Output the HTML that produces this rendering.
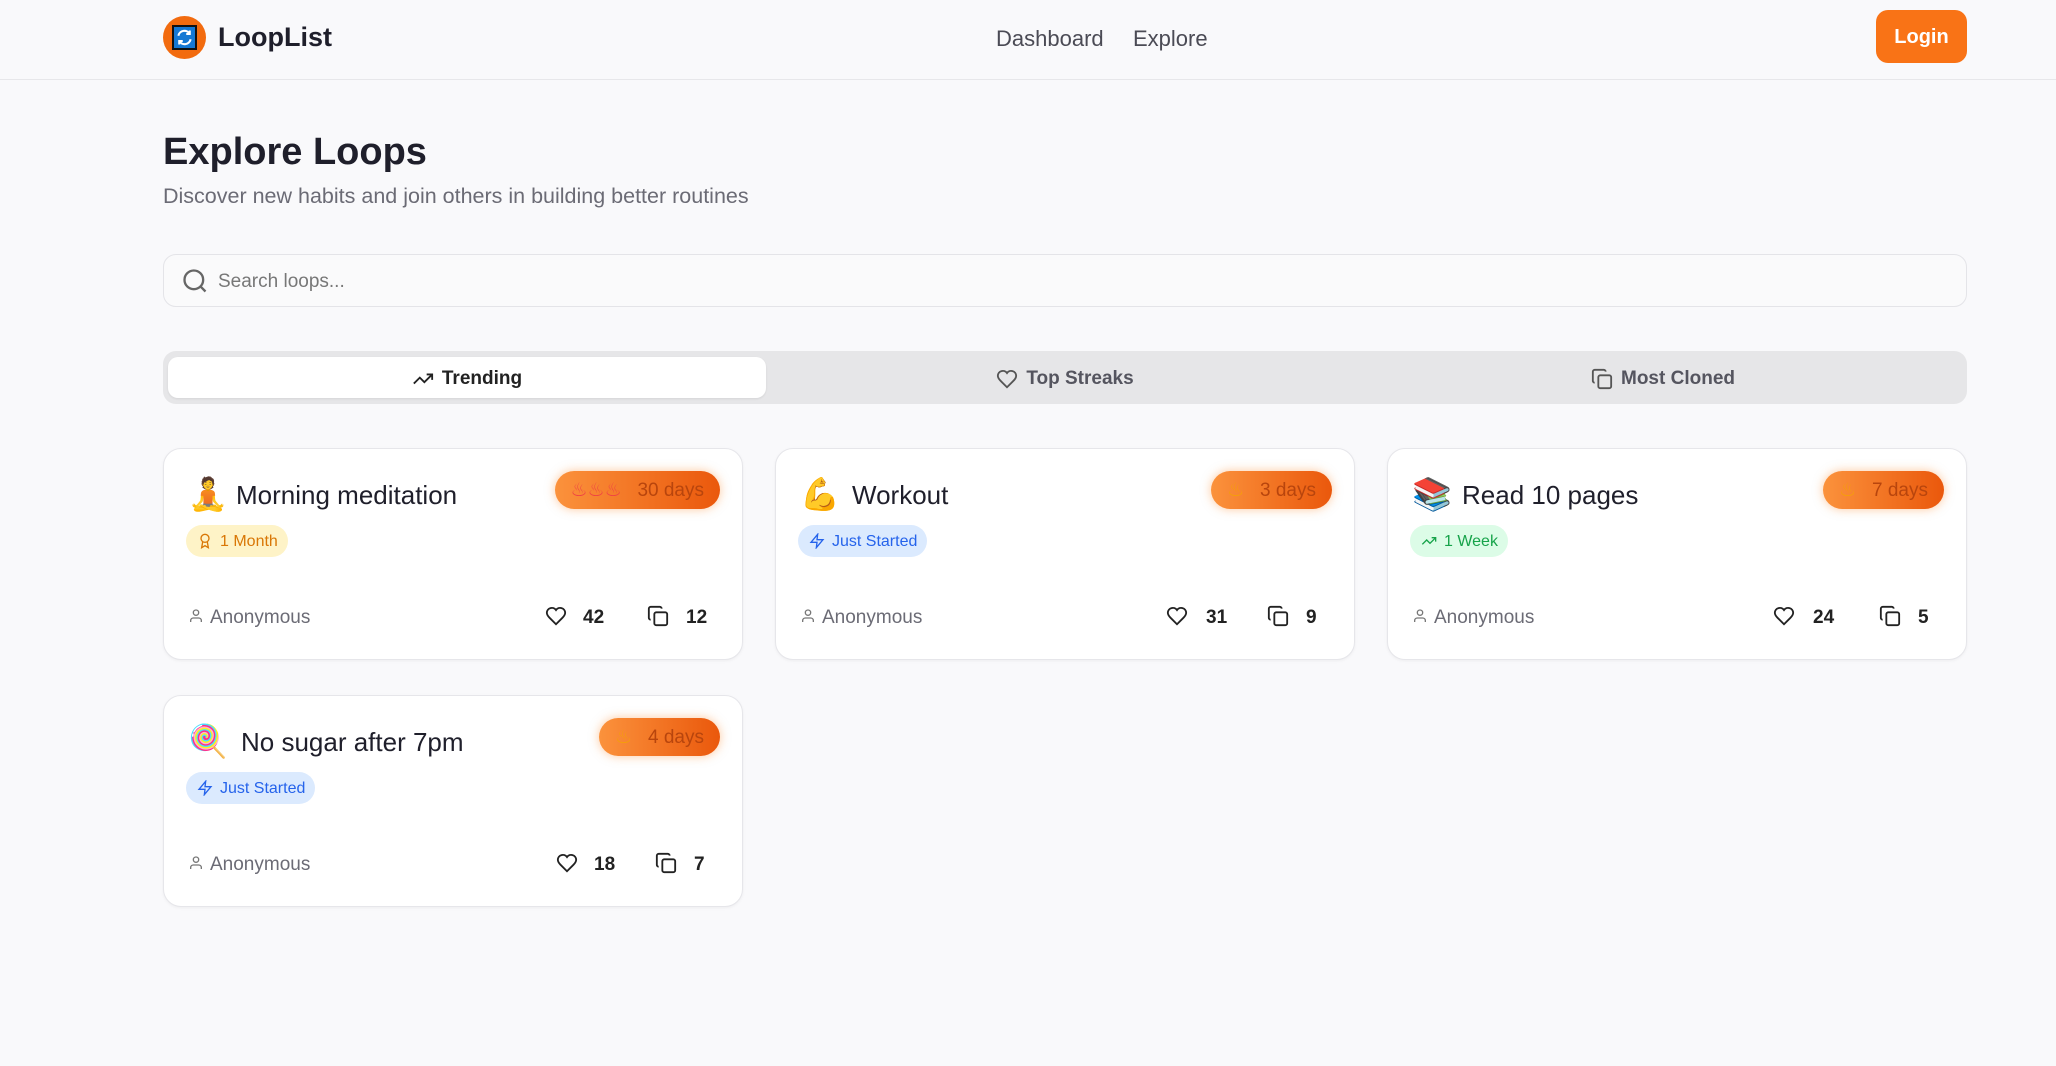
<!DOCTYPE html>
<html><head><meta charset="utf-8"><style>
*{box-sizing:border-box;margin:0;padding:0}
body{width:2056px;height:1066px;background:#f9f9fb;font-family:"Liberation Sans","DejaVu Sans",sans-serif;color:#1f1f2b;position:relative;overflow:hidden}
.hdr{position:absolute;left:0;top:0;width:2056px;height:80px;border-bottom:1px solid #e7e7ea}
.logo{position:absolute;left:163px;top:16px;width:43px;height:43px;border-radius:50%;background:#f26b0f}
.logo i{position:absolute;left:9px;top:9px;width:25px;height:25px;background:#1478d4;border:2px solid #111}
.brand{position:absolute;left:218px;top:22px;font-size:27px;font-weight:bold}
.nav{position:absolute;top:26px;font-size:22px;color:#4b4b55}
.login{position:absolute;left:1876px;top:10px;width:91px;height:53px;border-radius:12px;background:#f97316;color:#fff;font-weight:bold;font-size:20px;text-align:center;line-height:55px}
h1{position:absolute;left:163px;top:131px;font-size:38px;font-weight:bold}
.sub{position:absolute;left:163px;top:184px;font-size:21.5px;color:#6b6b75}
.search{position:absolute;left:163px;top:254px;width:1804px;height:53px;border:1px solid #e4e4e8;border-radius:13px;background:#fafafb}
.search span{position:absolute;left:54px;top:16px;font-size:19px;color:#777}
.tabs{position:absolute;left:163px;top:351px;width:1804px;height:53px;border-radius:13px;background:#e6e6e8}
.tab{position:absolute;top:6px;height:41px;width:598px;border-radius:10px;font-size:19px;font-weight:bold;color:#55555f;display:flex;align-items:center;justify-content:center;gap:8px;padding-top:2px}
.tab.on{background:#fff;color:#222;box-shadow:0 1px 2px rgba(0,0,0,.08)}
.card{position:absolute;width:580px;height:212px;background:#fff;border:1px solid #e6e6ea;border-radius:18px;box-shadow:0 1px 3px rgba(0,0,0,.05)}
.em{position:absolute;left:24px;top:26px;font-size:32px;font-family:"DejaVu Sans",sans-serif}
.ttl{position:absolute;left:72px;top:31px;font-size:26px;font-weight:500}
.badge{position:absolute;top:22px;right:22px;height:38px;border-radius:19px;background:linear-gradient(90deg,#fb923c,#ea580c);color:#b8450d;font-size:19px;line-height:40px;padding:0 16px 0 16px;box-shadow:0 0 10px rgba(251,146,60,.5)}
.tag{position:absolute;left:22px;top:76px;height:32px;border-radius:16px;font-size:16px;line-height:33px;padding:0 10px 0 34px}
.tag svg{position:absolute;left:11px;top:8px}
.foot{position:absolute;top:158px;font-size:19px;color:#6b6b75}
.num{position:absolute;top:158px;font-size:19px;font-weight:bold;color:#222}
.ic{position:absolute;top:156px}
</style></head><body>
<div class="hdr">
<div class="logo"><i><svg width="21" height="21" viewBox="0 0 24 24" fill="none" stroke="#fff" stroke-width="2.4"><path d="M5 10a7 7 0 0 1 13-2M19 14a7 7 0 0 1-13 2"/><path d="M18 4v4h-4M6 20v-4h4"/></svg></i></div>
<div class="brand">LoopList</div>
<div class="nav" style="left:996px">Dashboard</div>
<div class="nav" style="left:1133px">Explore</div>
<div class="login">Login</div>
</div>
<h1>Explore Loops</h1>
<div class="sub">Discover new habits and join others in building better routines</div>
<div class="search"><svg style="position:absolute;left:17px;top:12px" width="28" height="28" viewBox="0 0 24 24" fill="none" stroke="#666" stroke-width="2"><circle cx="11" cy="11" r="8"/><path d="M21 21l-4.3-4.3"/></svg><span>Search loops...</span></div>
<div class="tabs">
<div class="tab on" style="left:5px"><svg width="22" height="22" viewBox="0 0 24 24" fill="none" stroke="#222" stroke-width="2"><path d="M22 7l-8.5 8.5-5-5L2 17M16 7h6v6"/></svg>Trending</div>
<div class="tab" style="left:603px"><svg width="22" height="22" viewBox="0 0 24 24" fill="none" stroke="#555" stroke-width="2"><path d="M19 14c1.5-1.5 3-3.2 3-5.5A5.5 5.5 0 0 0 12 5.5 5.5 5.5 0 0 0 2 8.5c0 2.3 1.5 4 3 5.5l7 7z"/></svg>Top Streaks</div>
<div class="tab" style="left:1201px"><svg width="22" height="22" viewBox="0 0 24 24" fill="none" stroke="#555" stroke-width="2"><rect x="8" y="8" width="14" height="14" rx="2"/><path d="M4 16c-1.1 0-2-.9-2-2V4c0-1.1.9-2 2-2h10c1.1 0 2 .9 2 2"/></svg>Most Cloned</div>
</div>

<div class="card" style="left:163px;top:448px">
<div class="em">🧘</div><div class="ttl">Morning meditation</div>
<div class="badge"><span style="color:#ef4444">♨♨♨</span>&nbsp;&nbsp; 30 days</div>
<div class="tag" style="background:#fef3c7;color:#d97706"><svg width="16" height="16" viewBox="0 0 24 24" fill="none" stroke="#d97706" stroke-width="2"><circle cx="12" cy="8" r="6"/><path d="M15.5 13.5L17 22l-5-3-5 3 1.5-8.5"/></svg>1 Month</div>
<svg class="ic" style="left:24px;top:158px" width="16" height="18" viewBox="0 0 24 24" fill="none" stroke="#777" stroke-width="2"><circle cx="12" cy="7" r="4"/><path d="M4 21v-2a4 4 0 0 1 4-4h8a4 4 0 0 1 4 4v2"/></svg><div class="foot" style="left:46px">Anonymous</div>
<svg class="ic" style="left:381px" width="22" height="22" viewBox="0 0 24 24" fill="none" stroke="#222" stroke-width="2"><path d="M19 14c1.5-1.5 3-3.2 3-5.5A5.5 5.5 0 0 0 12 5.5 5.5 5.5 0 0 0 2 8.5c0 2.3 1.5 4 3 5.5l7 7z"/></svg><div class="num" style="left:419px">42</div>
<svg class="ic" style="left:483px" width="22" height="22" viewBox="0 0 24 24" fill="none" stroke="#222" stroke-width="2"><rect x="8" y="8" width="14" height="14" rx="2"/><path d="M4 16c-1.1 0-2-.9-2-2V4c0-1.1.9-2 2-2h10c1.1 0 2 .9 2 2"/></svg><div class="num" style="left:522px">12</div>
</div>

<div class="card" style="left:775px;top:448px">
<div class="em">💪</div><div class="ttl" style="left:76px">Workout</div>
<div class="badge"><span style="color:#f59e0b">♨</span>&nbsp;&nbsp; 3 days</div>
<div class="tag" style="background:#dbeafe;color:#2563eb"><svg width="16" height="16" viewBox="0 0 24 24" fill="none" stroke="#2563eb" stroke-width="2"><path d="M13 2L3 14h9l-1 8 10-12h-9z"/></svg>Just Started</div>
<svg class="ic" style="left:24px;top:158px" width="16" height="18" viewBox="0 0 24 24" fill="none" stroke="#777" stroke-width="2"><circle cx="12" cy="7" r="4"/><path d="M4 21v-2a4 4 0 0 1 4-4h8a4 4 0 0 1 4 4v2"/></svg><div class="foot" style="left:46px">Anonymous</div>
<svg class="ic" style="left:390px" width="22" height="22" viewBox="0 0 24 24" fill="none" stroke="#222" stroke-width="2"><path d="M19 14c1.5-1.5 3-3.2 3-5.5A5.5 5.5 0 0 0 12 5.5 5.5 5.5 0 0 0 2 8.5c0 2.3 1.5 4 3 5.5l7 7z"/></svg><div class="num" style="left:430px">31</div>
<svg class="ic" style="left:491px" width="22" height="22" viewBox="0 0 24 24" fill="none" stroke="#222" stroke-width="2"><rect x="8" y="8" width="14" height="14" rx="2"/><path d="M4 16c-1.1 0-2-.9-2-2V4c0-1.1.9-2 2-2h10c1.1 0 2 .9 2 2"/></svg><div class="num" style="left:530px">9</div>
</div>

<div class="card" style="left:1387px;top:448px">
<div class="em">📚</div><div class="ttl" style="left:74px">Read 10 pages</div>
<div class="badge"><span style="color:#f59e0b">♨</span>&nbsp;&nbsp; 7 days</div>
<div class="tag" style="background:#dcfce7;color:#16a34a"><svg width="16" height="16" viewBox="0 0 24 24" fill="none" stroke="#16a34a" stroke-width="2"><path d="M22 7l-8.5 8.5-5-5L2 17M16 7h6v6"/></svg>1 Week</div>
<svg class="ic" style="left:24px;top:158px" width="16" height="18" viewBox="0 0 24 24" fill="none" stroke="#777" stroke-width="2"><circle cx="12" cy="7" r="4"/><path d="M4 21v-2a4 4 0 0 1 4-4h8a4 4 0 0 1 4 4v2"/></svg><div class="foot" style="left:46px">Anonymous</div>
<svg class="ic" style="left:385px" width="22" height="22" viewBox="0 0 24 24" fill="none" stroke="#222" stroke-width="2"><path d="M19 14c1.5-1.5 3-3.2 3-5.5A5.5 5.5 0 0 0 12 5.5 5.5 5.5 0 0 0 2 8.5c0 2.3 1.5 4 3 5.5l7 7z"/></svg><div class="num" style="left:425px">24</div>
<svg class="ic" style="left:491px" width="22" height="22" viewBox="0 0 24 24" fill="none" stroke="#222" stroke-width="2"><rect x="8" y="8" width="14" height="14" rx="2"/><path d="M4 16c-1.1 0-2-.9-2-2V4c0-1.1.9-2 2-2h10c1.1 0 2 .9 2 2"/></svg><div class="num" style="left:530px">5</div>
</div>

<div class="card" style="left:163px;top:695px">
<div class="em">🍭</div><div class="ttl" style="left:77px">No sugar after 7pm</div>
<div class="badge"><span style="color:#f59e0b">♨</span>&nbsp;&nbsp; 4 days</div>
<div class="tag" style="background:#dbeafe;color:#2563eb"><svg width="16" height="16" viewBox="0 0 24 24" fill="none" stroke="#2563eb" stroke-width="2"><path d="M13 2L3 14h9l-1 8 10-12h-9z"/></svg>Just Started</div>
<svg class="ic" style="left:24px;top:158px" width="16" height="18" viewBox="0 0 24 24" fill="none" stroke="#777" stroke-width="2"><circle cx="12" cy="7" r="4"/><path d="M4 21v-2a4 4 0 0 1 4-4h8a4 4 0 0 1 4 4v2"/></svg><div class="foot" style="left:46px">Anonymous</div>
<svg class="ic" style="left:392px" width="22" height="22" viewBox="0 0 24 24" fill="none" stroke="#222" stroke-width="2"><path d="M19 14c1.5-1.5 3-3.2 3-5.5A5.5 5.5 0 0 0 12 5.5 5.5 5.5 0 0 0 2 8.5c0 2.3 1.5 4 3 5.5l7 7z"/></svg><div class="num" style="left:430px">18</div>
<svg class="ic" style="left:491px" width="22" height="22" viewBox="0 0 24 24" fill="none" stroke="#222" stroke-width="2"><rect x="8" y="8" width="14" height="14" rx="2"/><path d="M4 16c-1.1 0-2-.9-2-2V4c0-1.1.9-2 2-2h10c1.1 0 2 .9 2 2"/></svg><div class="num" style="left:530px">7</div>
</div>
</body></html>
